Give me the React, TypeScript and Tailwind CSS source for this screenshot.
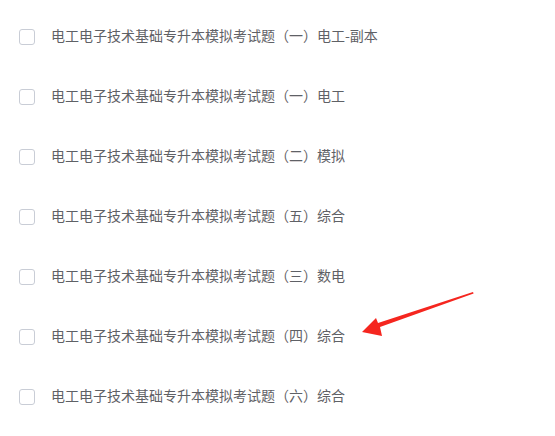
const items = [
  '电工电子技术基础专升本模拟考试题（一）电工-副本',
  '电工电子技术基础专升本模拟考试题（一）电工',
  '电工电子技术基础专升本模拟考试题（二）模拟',
  '电工电子技术基础专升本模拟考试题（五）综合',
  '电工电子技术基础专升本模拟考试题（三）数电',
  '电工电子技术基础专升本模拟考试题（四）综合',
  '电工电子技术基础专升本模拟考试题（六）综合',
];

export default function App() {
  return (
    <div
      className="relative w-[555px] h-[436px] bg-white pt-[7px]"
      style={{ fontFamily: '"Noto Sans CJK SC", "Noto Sans", sans-serif' }}
    >
      {items.map((label, i) => (
        <label key={i} className="flex items-center h-[60px] pl-[19px] cursor-pointer">
          <span className="w-4 h-4 rounded-[3px] border border-[#c9cdd6] bg-white shrink-0" />
          <span className="ml-4 pb-[4px] text-[14px] leading-none text-[#5f6166]">{label}</span>
        </label>
      ))}

      {/* red annotation arrow */}
      <svg className="absolute left-0 top-0 pointer-events-none" width="555" height="436">
        <path d="M473 292 L473.6 293.4 L380 327 L382 336 L362 332 L376 318 L378 323 Z" fill="#f5261f" />
      </svg>
    </div>
  );
}
